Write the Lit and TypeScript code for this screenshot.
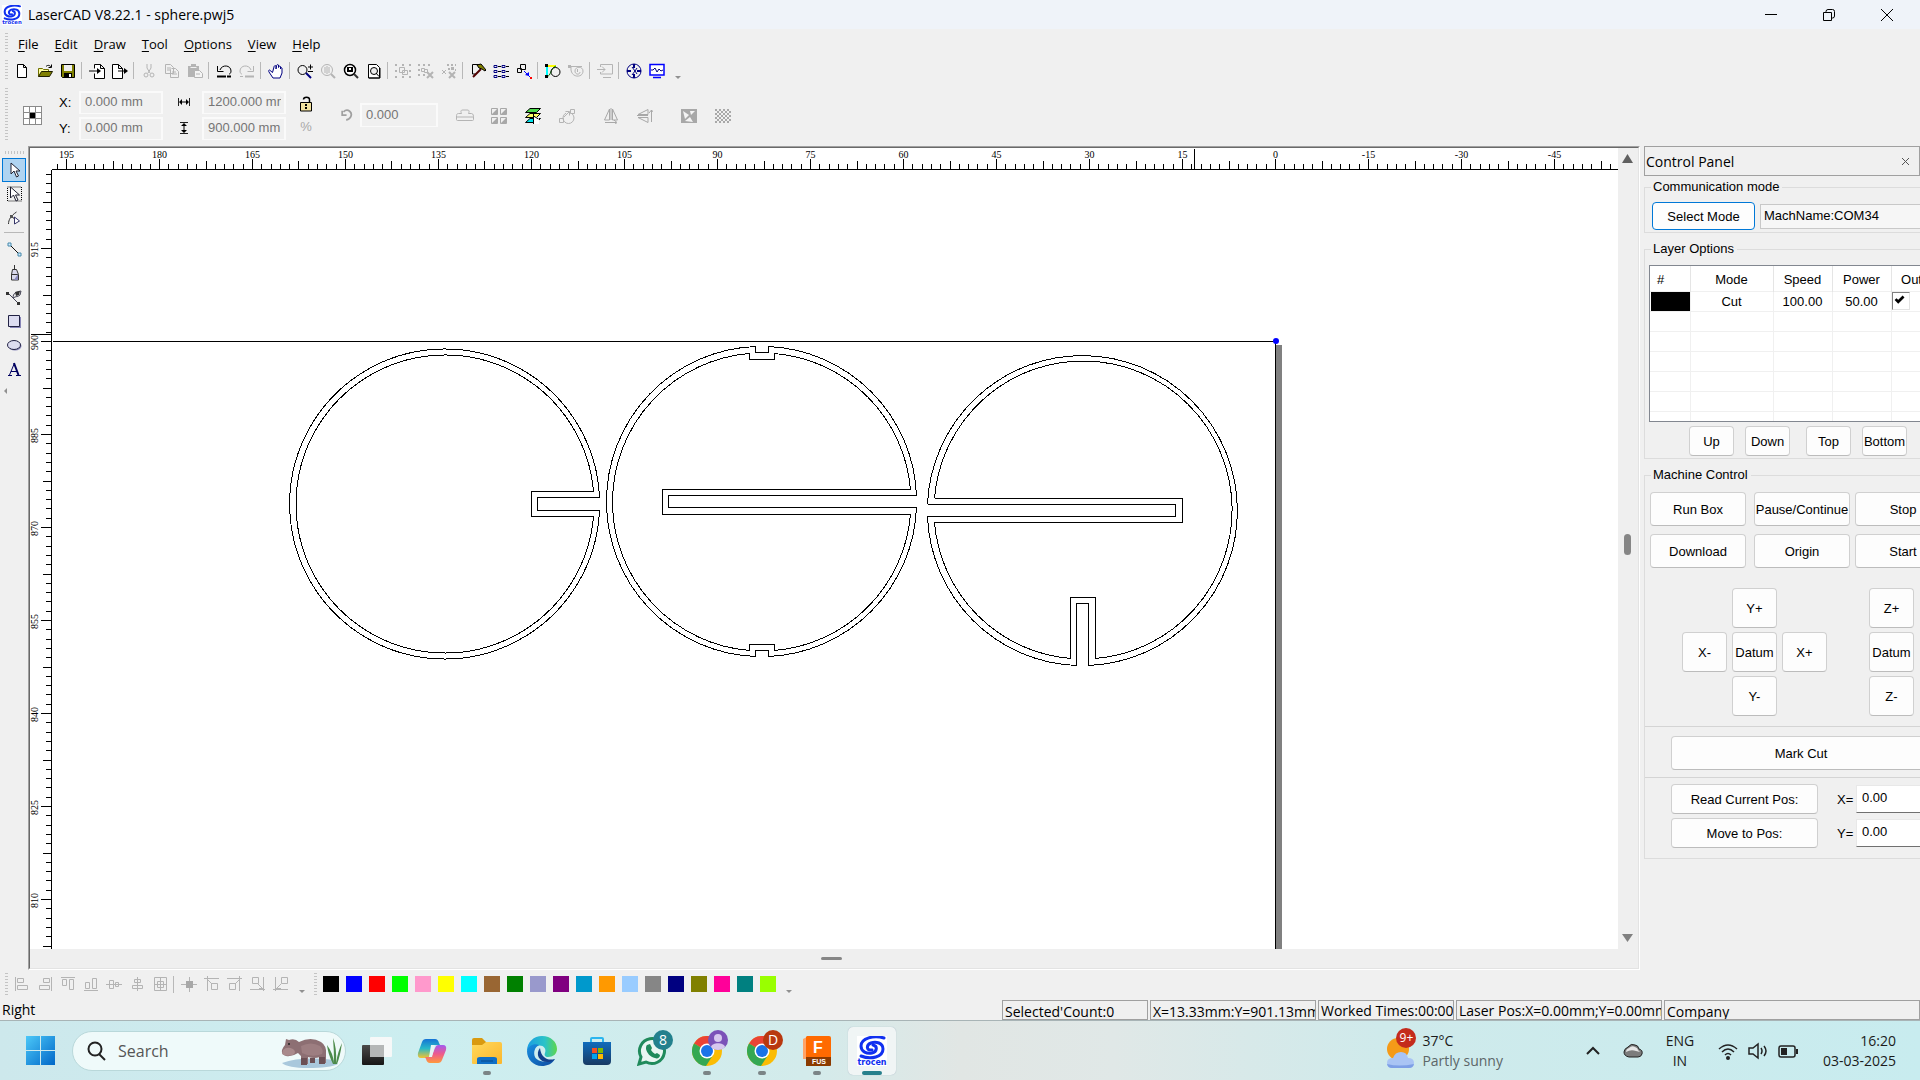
import { LitElement, html, svg, css, type TemplateResult } from "lit";
import { customElement } from "lit/decorators.js";

type Art = TemplateResult<2>;

const icon = (art: unknown, size = 16, box = 16) =>
  html`<svg width=${size} height=${size} viewBox="0 0 ${box} ${box}" aria-hidden="true">${art}</svg>`;

/* ---------- toolbar icons, on a 16 x 16 grid ---------- */
const line = (d: string, color = "#000", w = 1, fill = "none"): Art =>
  svg`<path d=${d} fill=${fill} stroke=${color} stroke-width=${w}/>`;
const G = "#b4b4b4";

const art: Record<string, unknown> = {
  new: line("M3.5 1.500h6l3 3v10h-9zM9.5 1.500v3h3", "#000", 1, "#fff"),
  open: svg`${line("M1.5 13.5v-8h4l1 1h5v3", "#707000", 1, "#ffffa0")}${line("M1.5 13.5l3-5h11l-3 5z", "#202000", 1, "#808000")}${line("M9 3.500c2-2 4-1 5 .5M14.500 1.500v3h-3")}`,
  save: svg`${line("M1.500 1.500h13v13h-12l-1-1z", "#000", 1, "#808000")}<path d="M4 2h8v6H4z" fill="#f0f0f0"/><path d="M4 10h8v5H4z" fill="#000"/><path d="M9 11h2v3H9z" fill="#fff"/>`,
  import: svg`${line("M5.500 5.500v-4h6l4 4v10h-10v-5M11.500 1.500v4h4", "#000", 1, "#fff")}${line("M0 8h9")}<path d="M8 5l4 3-4 3z"/>`,
  export: svg`${line("M.5 1.500h6l4 4v10h-10zM6.500 1.500v4h4", "#000", 1, "#fff")}${line("M6 8h7")}<path d="M12 5l4 3-4 3z"/>`,
  cut: svg`${line("M6 1v4l3 5M10 1v4l-3 5", G, 1)}<circle cx="5" cy="12" r="2" fill="none" stroke=${G}/><circle cx="11" cy="12" r="2" fill="none" stroke=${G}/>`,
  copy: line("M1.500 1.500h5l3 3v6h-8zM3 5h4M3 7h4M7.500 5.500h4l3 3v6h-8v-8M8 9h4M8 11h5", G),
  paste: svg`<path d="M1 3h3V1h5v2h3v11H1z" fill=${G}/>${line("M3.500 4.500h6", "#f0f0f0")}${line("M7.500 7.500h5l3 3v4h-8zM9 11h4", G, 1, "#f4f4f4")}`,
  undo: svg`${line("M4 7c2-6 11-5 11 1 0 2-1 3-2 3M1.500 3v5.500h6", "#000", 1)}${line("M1 13.500h9", "#000", 2)}${line("M11 13.500h4", "#000", 2)}`,
  redo: svg`${line("M12 7c-2-6-11-5-11 1 0 2 1 3 2 3M14.500 3v5.500h-6", G, 1)}${line("M6 13.500h9", G, 2)}${line("M1 13.500h3", G, 1)}`,
  hand: line("M4.500 9.500l-3-2.500c-1 0-1 1-.5 2l4 6h7l2-5V5c-1-1-1.500 0-1.500 1V3.500c-1-1-2 0-2 1V2c-1-1-2 0-2 1l-.5 3V3c-1-1-2 0-2 1z", "#000080", 1, "#fff"),
  zoom: svg`<circle cx="5.500" cy="7" r="4.500" fill="none" stroke="#000"/>${line("M9 10l5 5", "#000080", 2)}${line("M11 4h5M13.500 1.500v5M11 8.500h5")}`,
  zoomsel: svg`<circle cx="7" cy="7" r="5.500" fill="none" stroke=${G}/>${line("M5 4v6M7 3v8M9 4v6", G, 1)}${line("M11 11l4 4", G, 2)}`,
  zoomall: svg`<circle cx="7" cy="7" r="5.500" fill="#fff" stroke="#000" stroke-width="1.500"/><path d="M4 4h6v5H4z"/><path d="M6 5h2v2H6z" fill="#fff"/>${line("M11 11l4 4", "#333", 2)}`,
  zoompage: svg`${line("M2.500 1.500h8l3 3v10.500h-11z", "#000", 1, "#fff")}${line("M3 15h11v-10", "#000", 1)}<circle cx="8" cy="8" r="3.500" fill="#eee" stroke="#000"/>${line("M10 10l3 3.500", "#000", 1)}`,
  group: svg`${line("M4.500 4.500h5v5h-5zM7.500 7.500h5v4h-5z", G)}<path d="M0 1h2v2H0zM7 1h2v2H7zM14 1h2v2h-2zM0 7h2v2H0zM14 7h2v2h-2zM0 13h2v2H0zM7 13h2v2H7zM14 13h2v2h-2z" fill=${G}/>`,
  ungroup: svg`${line("M3.500 5.500h3v3h-3zM6.500 6.500h3v3h-3z", G)}<path d="M0 1h2v2H0zM5 1h2v2H5zM10 1h2v2h-2zM0 6h2v2H0zM0 11h2v2H0zM5 11h2v2H5z" fill=${G}/>${line("M9 9l6 6M15 9l-6 6", G, 2)}`,
  ungroupall: svg`${line("M1 7l4 4M5 7l-4 4", G, 1)}${line("M8 9l6 6M14 9l-6 6", G, 2)}<path d="M6 1h2v2H6zM10 1h2v2h-2zM14 1h1v2h-1zM10 4h3v3h-3zM7 5h2v2H7zM14 6h1v2h-1z" fill=${G}/>`,
  hammer: svg`${line("M2.500 11v-9.500h7M2.500 11h3", "#000", 1)}${line("M3 14l8-8", "#500000", 2)}<path d="M7 2l4-1 5 6-1 1-3-2-3-1z" fill="#808000" stroke="#000"/>`,
  list: svg`${line("M1 2.500h3v2h-3zM1 7.500h3v2h-3zM1 12.500h3v2h-3zM9 2.500h3v2h-3zM9 7.500h3v2h-3zM9 12.500h3v2h-3z", "#000080")}${line("M5 3.500h3M5 8.500h3M5 13.500h3M13 3.500h3M13 8.500h3M13 13.500h3")}`,
  node: svg`${line("M4.500 1.500h5v5h-5zM1.500 5.500h4v4h-4z")}${line("M8 8l6 6", "#00f", 1)}<path d="M9 12l4-3v4z" fill="#00f"/><path d="M14 14h2v2h-2z" fill="red"/>`,
  curve: svg`${line("M2 3h9", "#ff0", 2)}${line("M2 4v8", "#0ff", 2)}${line("M2 13c4 1 3-8 9-10", "#008000", 1)}<circle cx="10.500" cy="9" r="4.500" fill="none" stroke="#000"/><path d="M0 1h3v3H0zM0 12h3v3H0z"/>`,
  spiral: svg`${line("M1 3.500h13M3 4v3c1 8 12 8 12 1 0-5-8-5-8 0 0 4 5 4 5 1", G)}<path d="M0 2h3v3H0z" fill=${G}/>${line("M9.500 6v3", G, 1)}`,
  send: svg`${line("M3.500 4v-2.500h12v9.500h-12v-2M6 14.500h8", G, 1)}${line("M0 6.500h8M5 3.500l3 3-3 3", G, 1)}`,
  target: svg`<circle cx="8" cy="8" r="7" fill="none" stroke="#000080" stroke-width="1"/>${line("M8 1v4M8 11v4M1 8h4M11 8h4", "#000080", 2)}${line("M6 4l3 4-3 4M11 5l-2 3 2 3", "#000080", 1)}`,
  monitor: svg`${line("M1 1.500h14v10.500h-14zM4 14.500h8", "#00f", 1.5, "#fff")}${line("M2 7h2l2-2 2 4 2-3 2 2 2-1", "#000080", 1)}`,
  anchor: svg`<rect x="0" y="0" width="19" height="19" fill="#8a8a8a"/><path d="M1 1h5v5H1zM7 1h5v5H7zM13 1h5v5h-5zM1 7h5v5H1zM13 7h5v5h-5zM1 13h5v5H1zM7 13h5v5H7zM13 13h5v5h-5z" fill="#fff"/><path d="M7 7h5v5H7z"/>`,
  width: svg`${line("M2.500 4v8M13.500 4v8", "#222", 1)}${line("M4 8h8", "#000", 1)}<path d="M3 8l3-3v6zM13 8l-3-3v6z"/>`,
  height: svg`${line("M4 2.500h8M4 13.500h8", "#222", 1)}${line("M8 4v8", "#000", 1)}<path d="M8 3l-3 3h6zM8 13l-3-3h6z"/>`,
  lock: svg`${line("M11.500 7V3.500c0-3-6-3-6 0", "#000", 1.5)}${line("M2.500 6.500h11v8.500h-11z", "#000", 1, "#f2e2a0")}<path d="M7 8h2v2H7zM7 11h2v2H7z"/>`,
  rotate: svg`${line("M4 4.500c5-5 11 1 8 6-1 2-3 3-5 3M2.500 3v5h5", "#a0a0a0", 2)}`,
  stamp: svg`${line("M7 3h4c3 0 2 2 1.500 3.500h3c2 0 2 3 2 3.500h-17c0-2 0-3.500 2-3.500h3C5 5 4 3 7 3z", G)}${line("M.5 10v2.500q0 1 1 1h15q1 0 1-1V10", G)}`,
  tiles: svg`${line("M.5.5h6v6h-6zM9.500.5h6v6h-6zM.5 9.500h6v6h-6zM9.500 9.500h6v6h-6z", "#a8a8a8")}<path d="M6 1v5H1zM15 1v5h-5zM6 10v5H1zM15 10v5h-5z" fill="#a8a8a8"/>`,
  layers: svg`${line("M5 .5h10.500l-4 4H.5z", "#000", 1, "#4ddb4d")}${line("M5 5.500h10.500l-4 4H.5z", "#000", 1, "#ffff66")}${line("M5 10.500h10.500l-4 4H.5z", "#000", 1, "#00e5ee")}<path d="M9 9h5v7H9z" fill="#fff"/>${line("M8.500 6v10M8.500 8l5 3", "#000", 1)}`,
  path: svg`<circle cx="9.500" cy="10" r="5.500" fill="none" stroke=${G}/><path d="M6 3h7v7H9z" fill="#f0f0f0"/>${line("M.5 10.500h4v4h-4zM11.500 1.500h4v4h-4zM5 9l5-5M6.500 3.500h4v4", G)}`,
  mirrorh: line("M6.500 1v11h-5zM9.500 1v11h5zM8 0v12M2 14.500h11M11 12l3 2.500-3 2.500", "#a8a8a8"),
  mirrorv: line("M0 7.500h11zM11 1.500v5h-10zM11 9.500v5l-10-5zM14.500 2v12M12 5l2.500-3 2.500 3", "#a8a8a8"),
  invert: svg`<path d="M0 1h16v14H0z" fill="#a8a8a8"/><path d="M2 3l6 4-4 4zM9 3h5l-4 4zM4 13l5-4 3 5z" fill="#f4f4f4"/>`,
  dither: svg`${[0, 1, 2, 3, 4, 5, 6].map((r) => [0, 1, 2, 3].map((c) => svg`<rect x=${c * 4 + (r % 2) * 2} y=${r * 2 + 1} width="2" height="2" fill="#a8a8a8"/>`))}`,
  arrow: line("M5 1v11l3-3 2.500 6 2-1-2.500-5h4z", "#202030", 1, "#fff"),
  select: svg`<rect x="1.500" y="1" width="14" height="14" fill="none" stroke="#000" stroke-dasharray="1 1"/>${line("M4.500 1v11l3-3 2.500 6 2-1-2.500-5h4z", "#202030", 1, "#fff")}`,
  nodeedit: svg`${line("M2.500 14c0-4 2-8 8-12M5 5l5 6", "#333", 1)}${line("M8.500 7v7l5-3z", "#336", 1, "#fff")}<path d="M4 5h3v3H4z" fill="#555"/>`,
  segment: svg`${line("M3 3l10 10", "#111", 1)}<path d="M2 2h3v3H2zM12 12h3v3h-3z" fill="#d5ecff" stroke="#48a"/>`,
  pen: svg`${line("M8.500 0v5M6.500 4.500h4l2 5v5.500h-7V9.500zM5 9.500h7", "#333", 1, "#d8d8ec")}<path d="M8 15l4-6v6z" fill="#8888bb"/>`,
  bezier: svg`${line("M2 4l10 10M7 9c0-5 3-6 8-7l-1 4c-2 2-4 1-7 3", "#445", 1)}<path d="M0 3h3v3H0zM11 13h3v3h-3zM9 3l5-1-1 4-3 1z" fill="#333"/>`,
  rect: svg`<path d="M4 4h11v11H4z" fill="#8886b8"/>${line("M2.500 2.500h11v11h-11z", "#222244", 1, "#dcdcf0")}`,
  ellipse: svg`<ellipse cx="9" cy="9" rx="6.500" ry="4.500" fill="#8886b8"/><ellipse cx="8" cy="8" rx="6.500" ry="4.500" fill="#dcdcf0" stroke="#222244"/>`,
  text: svg`${line("M2 14.500h4M10 14.500h5M3.500 14l5-12M5 10.500h6", "#000060", 1)}${line("M8 2l4.500 12", "#000060", 2)}`,
  left: line("M1.500 1v14M3.500 2.500h6v4h-6zM3.500 9.500h10v4h-10z", G),
  right: line("M14.500 1v14M6.500 2.500h6v4h-6zM2.500 9.500h10v4h-10z", G),
  top: line("M1 1.500h14M2.500 3.500h4v6h-4zM9.500 3.500h4v10h-4z", G),
  bottom: line("M1 14.500h14M2.500 6.500h4v6h-4zM9.500 2.500h4v10h-4z", G),
  midh: line("M0 8.500h16M3.500 4.500h4v8h-4zM9.500 6.500h3v4h-3z", G),
  midv: line("M8.500 1v14M5.500 3.500h6v3h-6zM3.500 9.500h10v3h-10z", G),
  center: line("M2.500 1.500h12v13h-12zM8.500 1v14M2 8.500h13M5.500 5.500h6v6h-6z", G),
  pagecenter: svg`${line("M8.500 1v15M0 8.500h16", G)}<path d="M5 5h7v7H5z" fill="#a8a8a8"/>`,
  topleft: line("M0 2.500h15M3.500 0v15M7.500 7.500h6v6h-6zM4 4l4 4", G),
  topright: line("M0 2.500h15M12.500 0v15M2.500 7.500h6v6h-6zM8 8l4-4", G),
  bottomright: line("M0 13.500h15M13.500 1v14M2.500 1.500h6v6h-6zM8 8l5 5M9 12.500h4", G),
  bottomleft: line("M0 13.500h15M2.500 1v14M8.500 1.500h6v6h-6zM8 8l-5 5M8 12.500h-5", G),
};

/* ---------- brand artwork ---------- */
const trocen = svg`
  <rect width="30" height="30" fill="#fff"/>
  <g fill="none" stroke="#1030f0" stroke-linecap="round">
    <path d="M27 2C17-1 4 2 4 10c0 6 6 8 11 7 5-1 6-7 1-8" stroke-width="3"/>
    <path d="M4 20c10 4 22 1 22-7 0-6-7-8-12-6-5 2-5 8 1 7" stroke-width="3"/>
  </g>
  <text x="15" y="29" text-anchor="middle" class="brand" font-size="8">trocen</text>`;

const chrome = svg`
  <circle cx="15" cy="15" r="15" fill="#fbbc04"/>
  <path d="M15 15L2 7.500A15 15 0 0 1 28 7.500L15 8z" fill="#ea4335"/>
  <path d="M15 15L2 7.500A15 15 0 0 0 14 30l7-11z" fill="#34a853"/>
  <circle cx="15" cy="15" r="7.500" fill="#fff"/><circle cx="15" cy="15" r="6" fill="#1a73e8"/>`;

const apps: { name: string; art: unknown; badge?: unknown; tone?: string; running?: boolean; active?: boolean }[] = [
  {
    name: "Task view",
    art: svg`<defs><linearGradient id="tv" x2="0" y2="1"><stop stop-color="#4a4a4a"/><stop offset="1" stop-color="#161616"/></linearGradient></defs>
      <rect x="0" y="9" width="22" height="20" rx="1" fill="url(#tv)"/><rect x="8" y="1" width="22" height="20" rx="1" fill="#f6f8f8"/><rect x="8" y="9" width="14" height="12" fill="#b5b7b7"/>`,
  },
  {
    name: "Copilot",
    art: svg`<defs><linearGradient id="c1" x2="0" y2="1"><stop stop-color="#1473d6"/><stop offset=".5" stop-color="#28b8c8"/><stop offset="1" stop-color="#f3c430"/></linearGradient>
      <linearGradient id="c2" x2="0" y2="1"><stop stop-color="#a35bf0"/><stop offset=".5" stop-color="#ee5a8c"/><stop offset="1" stop-color="#ff9a3c"/></linearGradient></defs>
      <path d="M9 3h9q3 0 4 4l1 2h-4q-3 0-4 4l-2 6q-1 3-4 3H4q-4 0-3-5L5 6q1-3 4-3z" fill="url(#c1)"/>
      <path d="M21 9h5q4 0 3 5l-4 10q-1 3-4 3h-8q-3 0-4-4l-1-2h4q3 0 4-4l2-5q1-3 3-3z" fill="url(#c2)"/><path d="M14 9h4l-3 12h-3z" fill="#e6f4f4"/>`,
  },
  {
    name: "File Explorer",
    running: true,
    art: svg`<defs><linearGradient id="fe" x2="1" y2="1"><stop stop-color="#ffd95c"/><stop offset="1" stop-color="#fbb62c"/></linearGradient></defs>
      <path d="M0 4q0-2 2-2h8l4 4v6H0z" fill="#d99a10"/><path d="M0 9h10l4-3h14q2 0 2 2v19q0 1-1 1H1q-1 0-1-1z" fill="url(#fe)"/>
      <path d="M5 28v-5q0-2 3-2h14q3 0 3 2v5z" fill="#0f6fc6"/><path d="M9 25h12" stroke="#0a4a8a" stroke-width="1"/>`,
  },
  {
    name: "Edge",
    art: svg`<defs><linearGradient id="e1" x2="1"><stop stop-color="#1b9de2"/><stop offset=".6" stop-color="#2bc3c8"/><stop offset="1" stop-color="#5fd64c"/></linearGradient>
      <linearGradient id="e2" x2="1" y2="1"><stop stop-color="#1a8fe0"/><stop offset="1" stop-color="#0c4aa0"/></linearGradient></defs>
      <path d="M0 15C0 6 7 0 15 0c9 0 15 6 15 13 0 5-4 8-9 8-3 0-4-2-3-4 2-5-3-9-8-7-5 1-9 3-10 5z" fill="url(#e1)"/>
      <path d="M0 15c1-6 8-8 12-6-4 2-6 7-4 12 2 4 10 7 20 2-3 5-8 7-13 7C6 30 0 23 0 15z" fill="url(#e2)"/>
      <path d="M13 12c-5 6-1 15 9 14 2 0 4-1 6-3-7 2-14-1-15-11z" fill="#12408c"/>`,
  },
  {
    name: "Microsoft Store",
    art: svg`<defs><linearGradient id="ms" x2="0" y2="1"><stop stop-color="#0f6cbd"/><stop offset="1" stop-color="#183a63"/></linearGradient></defs>
      <path d="M9 8V3q0-1 1-1h10q1 0 1 1v5" fill="none" stroke="#2cb5ee" stroke-width="2"/><path d="M1 6h28v19q0 4-4 4H5q-4 0-4-4z" fill="url(#ms)"/>
      <path d="M10 12h5v5h-5z" fill="#f25022"/><path d="M16 12h5v5h-5z" fill="#7fba00"/><path d="M10 18h5v5h-5z" fill="#00a4ef"/><path d="M16 18h5v5h-5z" fill="#ffb900"/>`,
  },
  {
    name: "WhatsApp",
    badge: "8",
    tone: "teal",
    art: svg`<path d="M2 28l2-7A12.500 12.500 0 1 1 9 26z" fill="#e9f6f2" stroke="#1f8a5b" stroke-width="3"/>
      <path d="M10 9l3-1 2 4-1 2c1 2 3 3 4 4l2-1 3 2c0 3-3 4-5 3-5-1-8-5-9-9 0-2 0-3 1-4z" fill="#1f8a5b"/>`,
  },
  {
    name: "Chrome",
    running: true,
    tone: "purple",
    badge: icon(svg`<circle cx="10" cy="8" r="4" fill="#d7c8ee"/><path d="M3 17c1-5 13-5 14 0-3 4-11 4-14 0z" fill="#d7c8ee"/>`, 20, 20),
    art: chrome,
  },
  { name: "Chrome, profile D", running: true, tone: "rust", badge: "D", art: chrome },
  {
    name: "Fusion",
    running: true,
    art: svg`<path d="M1 3l4-2v22H1z" fill="#ffa366"/><path d="M5 0h22q2 0 2 2v19H4V1z" fill="#ff6a00"/><path d="M4 21h25v8q0 1-1 1H4z" fill="#8a3a00"/>
      <text x="16" y="17" text-anchor="middle" class="mark" font-size="16">F</text><text x="17" y="28" text-anchor="middle" class="mark" font-size="7">FUS</text>`,
  },
  { name: "LaserCAD", active: true, art: trocen },
];

/* ---------- toolbars ---------- */
type Tool = [key: string, label: string, off?: boolean];
const toolGroups: Tool[][] = [
  [["new", "New"], ["open", "Open"], ["save", "Save"]],
  [["import", "Import"], ["export", "Export"]],
  [["cut", "Cut", true], ["copy", "Copy", true], ["paste", "Paste", true]],
  [["undo", "Undo"], ["redo", "Redo", true]],
  [["hand", "Pan"]],
  [["zoom", "Zoom"], ["zoomsel", "Zoom selection", true], ["zoomall", "Zoom all"], ["zoompage", "Zoom page"]],
  [["group", "Group", true], ["ungroup", "Ungroup", true], ["ungroupall", "Ungroup all", true]],
  [["hammer", "Settings"], ["list", "Object list"], ["node", "Path order"]],
  [["curve", "Smooth curve"], ["spiral", "Offset curve", true]],
  [["send", "Send", true]],
  [["target", "Position"], ["monitor", "Preview"]],
];
const propGroups: Tool[][] = [
  [["stamp", "Stamp", true], ["tiles", "Array", true], ["layers", "Layers"], ["path", "Lead in", true]],
  [["mirrorh", "Mirror horizontal", true], ["mirrorv", "Mirror vertical", true]],
  [["invert", "Invert", true], ["dither", "Dither", true]],
];
const sideGroups: Tool[][] = [
  [["arrow", "Pick"], ["select", "Select area"], ["nodeedit", "Edit nodes"]],
  [["segment", "Line"], ["pen", "Pen"], ["bezier", "Bezier"], ["rect", "Rectangle"], ["ellipse", "Ellipse"], ["text", "Text"]],
];
const alignGroups: Tool[][] = [
  [["left", "Align left", true], ["right", "Align right", true], ["top", "Align top", true], ["bottom", "Align bottom", true], ["midh", "Align middle", true], ["midv", "Align centre", true], ["center", "Centre both", true]],
  [["pagecenter", "Page centre", true], ["topleft", "Page top left", true], ["topright", "Page top right", true], ["bottomright", "Page bottom right", true], ["bottomleft", "Page bottom left", true]],
];
const palette = ["#000000", "#0000ff", "#ff0000", "#00ff00", "#ff99cc", "#ffff00", "#00ffff", "#996633", "#008000", "#9999cc", "#800080", "#0099cc", "#ff9900", "#99ccff", "#868686", "#000080", "#808000", "#ff0099", "#008080", "#99ff00"];

/* ---------- drawing surface ---------- */
const ORIGIN = { x: 1245, y: 193 };
const STEP = 9.3;

/* Ticks every 1.5 mm, numbered every 15 mm, over the visible width and height. */
const rulers = (width: number, height: number) => {
  const out: Art[] = [];
  for (let k = Math.ceil((ORIGIN.x - width) / STEP); k <= 131; k++) {
    const x = Math.round(ORIGIN.x - k * STEP);
    const top = k % 10 === 0 ? 10 : k % 5 === 0 ? 12 : 15;
    out.push(svg`<path class="ink" d="M${x} ${top}V21"/>`);
    if (k % 10 === 0) out.push(svg`<text class="tick" x=${x} y="9" text-anchor="middle">${k * 1.5}</text>`);
  }
  for (let k = -18; k * STEP < height - ORIGIN.y; k++) {
    const y = Math.round(ORIGIN.y + k * STEP);
    const left = k % 10 === 0 ? 10 : k % 5 === 0 ? 12 : 15;
    out.push(svg`<path class="ink" d="M${left} ${y}H21"/>`);
    if (k % 10 === 0) out.push(svg`<text class="tick" transform="translate(7 ${y + 1}) rotate(-90)" text-anchor="middle">${900 - k * 1.5}</text>`);
  }
  return out;
};

const parts = [
  /* disc with a short slot */
  "M569 349H507V362H569A155 155 0 1 1 569 349",
  "M563 343H501V368H563A149 149 0 1 1 563 343",
  /* disc with a long slot and two notches */
  "M886 347H638V359H886A155 155 0 0 1 738 508V502H725V508A155 155 0 0 1 576 353A155 155 0 0 1 725 198V204H738V198A155 155 0 0 1 886 347",
  "M880 341H632V366H880A149 149 0 0 1 744 502V496H719V502A149 149 0 0 1 582 353A149 149 0 0 1 719 205V211H744V205A149 149 0 0 1 880 341",
  /* disc with a long slot and a foot slot */
  "M897 356H1145V368H897A155 155 0 0 0 1046 517V455H1058V517A155 155 0 1 0 897 356",
  "M904 350H1152V374H904A149 149 0 0 0 1040 510V449H1065V510A149 149 0 1 0 904 350",
];

@customElement("app-root")
export class AppRoot extends LitElement {
  static styles = css`
    :host { display: block; --ui: "Open Sans", "Noto Sans", sans-serif; --sans: "Liberation Sans", Arial, sans-serif; font-family: var(--sans); font-size: 13px; color: #000; }
    * { box-sizing: border-box; }
    button, input, a { font: inherit; color: inherit; margin: 0; }
    svg { display: block; flex: none; }
    .app { display: flex; flex-direction: column; height: 100vh; min-height: 960px; background: #f0f0f0; overflow: hidden; }

    .title { display: flex; align-items: center; height: 29px; flex: none; background: #eff3f9; font-family: var(--ui); font-size: 14px; padding: 0 4px 0 2px; gap: 6px; }
    .title h1 { font: inherit; margin: 0; flex: 1; }
    .win { display: flex; }
    .win button { width: 58px; height: 28px; border: 0; background: none; padding: 0; display: grid; place-items: center; }

    .bar { display: flex; align-items: center; flex: none; padding-left: 5px; }
    .grip { width: 3px; align-self: stretch; margin: 3px 2px 3px 0; background: repeating-linear-gradient(#c4c4c4 0 1px, transparent 1px 3px); flex: none; }
    .menu { height: 28px; gap: 16px; font-family: var(--ui); font-size: 13px; padding-top: 1px; }
    .menu .grip { margin-right: -6px; }
    .menu button { border: 0; padding: 0; background: none; line-height: 20px; }
    .menu u { text-underline-offset: 2px; }
    .tools { height: 27px; }
    .tool { width: 23px; height: 23px; padding: 0; border: 0; background: none; display: grid; place-items: center; flex: none; }
    .sep { width: 1px; height: 17px; background: #b8b8b8; margin: 0 3px 0 2px; flex: none; }
    .more { width: 0; border: 3px solid transparent; border-top-color: #909090; border-bottom: 0; align-self: flex-end; margin: 0 9px 5px 7px; }

    .props { height: 62px; }
    .props .grip { margin: 4px 15px 5px 0; }
    .fields { display: grid; grid-template-columns: 20px 84px; row-gap: 3px; align-items: center; margin-left: 17px; }
    .fields.size { grid-template-columns: 26px 84px; margin-left: 13px; }
    .field { width: 100%; height: 23px; border: 2px solid #fafafa; border-bottom-width: 1px; background: #f0f0f0; color: #757575; padding: 0 3px 2px 4px; outline: none; }
    .ratio { display: grid; gap: 7px; width: 24px; margin-left: 8px; justify-items: center; color: #a8a8a8; }
    .turn { display: flex; align-items: center; gap: 6px; margin: 0 0 0 22px; }
    .turn input { width: 78px; height: 24px; }
    .cluster { display: flex; margin-left: 10px; padding-top: 2px; }
    .cluster .tool { width: 34px; }

    .main { display: flex; flex: 1; min-height: 0; }
    .side { width: 28px; flex: none; display: flex; flex-direction: column; align-items: center; padding-top: 5px; }
    .side .grip { width: 19px; height: 3px; margin: 0 0 4px; align-self: center; background: repeating-linear-gradient(90deg, #c4c4c4 0 1px, transparent 1px 3px); }
    .side .tool { width: 24px; height: 24px; border: 1px solid transparent; }
    .side .tool.on { background: #b0d4f1; border-color: #0078d7; }
    .side .sep { width: 20px; height: 1px; margin: 2px 0 4px; }
    .back { border: 3px solid transparent; border-right-color: #909090; border-left: 0; align-self: flex-start; margin: 7px 0 0 4px; }

    .view { flex: 1; min-width: 0; border: 1px solid; border-color: #a0a0a0 #fff #fff #a0a0a0; display: flex; }
    .inner { flex: 1; min-width: 0; border: 1px solid; border-color: #696969 #e3e3e3 #e3e3e3 #696969; display: grid; grid-template: minmax(0, 1fr) 19px / minmax(0, 1fr) 20px; background: #efefef; }
    .canvas { width: 100%; height: 100%; background: #fff; overflow: hidden; }
    .ink { fill: none; stroke: #000; stroke-width: 1; shape-rendering: crispEdges; }
    .shade { fill: #808080; shape-rendering: crispEdges; }
    .tick { font: 10px "Liberation Serif", serif; }
    .vscroll { display: flex; flex-direction: column; justify-content: space-between; align-items: center; padding: 6px 2px 6px 0; }
    .hscroll { grid-column: 1 / -1; display: grid; place-items: center; padding-right: 5px; }
    .hscroll i { width: 21px; height: 3px; border-radius: 2px; background: #868686; }
    .vscroll i { width: 7px; height: 21px; border-radius: 4px; background: #868686; margin-bottom: 8px; }

    .panel { width: 280px; flex: none; padding-left: 4px; overflow: hidden; }
    .panel > * { width: 310px; }
    .panel .head { width: 276px; height: 30px; border: 1px solid #a0a0a0; display: flex; align-items: center; justify-content: space-between; padding: 0 9px 0 1px; margin-bottom: 3px; font-family: var(--ui); font-size: 14px; }
    .head h2 { font: inherit; margin: 0; }
    .head button { border: 0; padding: 0; background: none; }
    .box { border: 1px solid #dcdcdc; margin: 0 0 8px; padding: 0 4px; min-width: 0; }
    .box legend { padding: 0 3px 0 2px; margin-left: 2px; line-height: 16px; height: 16px; }
    .row { display: flex; }
    .btn { height: 30px; padding: 0; border: 1px solid #d0d0d0; border-bottom-color: #bcbcbc; border-radius: 4px; background: #fdfdfd; white-space: nowrap; flex: none; display: flex; align-items: center; justify-content: center; }
    .comm { padding: 7px 0 2px 3px; gap: 5px; align-items: center; }
    .comm .btn { width: 103px; height: 28px; border-color: #0078d7; }
    .comm input { width: 180px; flex: none; height: 25px; border: 1px solid #c8c8c8; background: #f6f6f6; padding: 0 3px 2px; }
    .layers { height: 157px; border: 1px solid #828790; background: #fff; margin-top: 8px; overflow: hidden; }
    table { border-collapse: collapse; table-layout: fixed; width: 282px; }
    th { font-weight: 400; height: 25px; padding: 2px 0 0; text-align: center; border-right: 1px solid #e5e5e5; }
    th:first-child { text-align: left; padding-left: 7px; }
    td { height: 20px; padding: 0; text-align: center; border: 1px solid #f0f0f0; border-left: 0; }
    td.swatch { background: #000 content-box; padding: 0 0 0 1px; }
    td input { appearance: none; width: 18px; height: 18px; border: 1px solid; border-color: #808080 #e3e3e3 #e3e3e3 #808080; margin: 0; display: block; background: #fff; }
    td label { display: grid; }
    td label > * { grid-area: 1 / 1; }
    td svg { pointer-events: none; }
    .order { padding: 4px 0 2px 40px; }
    .order .btn { width: 45px; margin-right: 11px; }
    .order .btn:nth-child(2) { margin-right: 16px; }
    .cmds { display: grid; grid-template-columns: 104px 101px 96px; row-gap: 8px; padding: 9px 0 20px 1px; }
    .cmds .btn { width: 96px; height: 34px; }
    .jogs { display: flex; gap: 42px; padding-left: 33px; }
    .jog { display: grid; grid-template-columns: repeat(3, 45px); gap: 4px 5px; }
    .jog.z { grid-template-columns: 45px; }
    .jog .btn { height: 40px; }
    .jog .mid { grid-column: 2; }
    .jog .near { grid-column: 1; }
    .rule { border: 0; border-top: 1px solid #d4d4d4; margin: 10px -4px 9px; }
    .mark-row .btn { width: 260px; height: 34px; margin-left: 22px; }
    .rule.tight { margin: 7px -4px 6px; }
    .pos { display: grid; grid-template-columns: 147px 19px 100px; column-gap: 19px; row-gap: 4px; padding: 0 0 10px 22px; align-items: center; }
    .pos label { margin-right: -15px; }
    .pos input { height: 28px; width: 100px; border: 1px solid #e8e8e8; border-bottom-color: #707070; background: #fff; padding: 0 4px 4px 5px; margin-left: -19px; }

    .bottom { height: 28px; }
    .bottom .more { margin-left: 7px; margin-right: 9px; }
    .palette { display: flex; gap: 7px; padding: 0 3px 0 4px; }
    .chip { width: 16px; height: 16px; border: 0; padding: 0; }

    .status { height: 22px; flex: none; display: flex; gap: 2px; align-items: flex-end; font-family: var(--ui); font-size: 14px; }
    .status span { white-space: nowrap; overflow: hidden; line-height: 20px; }
    .hint { flex: 1; padding-left: 2px; }
    .pane { border: 1px solid #a0a0a0; height: 20px; padding-left: 2px; }
    .status .low { line-height: 22px; }
    .w1 { width: 146px; } .w2 { width: 166px; } .w3 { width: 136px; } .w4 { width: 206px; } .w5 { width: 256px; }

    .taskbar { height: 60px; flex: none; border-top: 1px solid #a8b4b6; background: linear-gradient(90deg, #cde8ec 0%, #cceef0 22%, #d3ebeb 42%, #e1e6e4 50%, #e0e8e7 58%, #cfeaeb 72%, #c8ecef 100%); display: flex; align-items: center; padding: 0 24px 0 26px; font-family: var(--ui); font-size: 14px; color: #1b1b1b; }
    .taskbar button { border: 0; background: none; padding: 0; }
    .search { display: flex; align-items: center; gap: 12px; width: 274px; height: 40px; margin-left: 17px; border-radius: 20px; background: #effafa; border: 1px solid #b9d8da; padding: 0 2px 0 13px; }
    .search input { flex: 1; min-width: 0; border: 0; background: none; outline: none; padding: 0; font-size: 16px; color: #555; }
    .search input::placeholder { color: #555; opacity: 1; }
    .apps { display: flex; gap: 7px; margin-left: 7px; }
    .app-btn { width: 48px; height: 48px; border-radius: 5px; position: relative; display: grid; place-items: center; }
    .apps .app-btn.active { box-shadow: 0 0 1px #9ab; background: #f0f5f5; }
    .dot { position: absolute; bottom: 0; left: 20px; width: 8px; height: 4px; border-radius: 2px; background: #7b8486; }
    .active .dot { left: 14px; width: 20px; background: #27808c; }
    .badge { position: absolute; top: 3px; right: 3px; width: 20px; height: 20px; border-radius: 10px; display: grid; place-items: center; color: #fff; font-size: 14px; line-height: 20px; }
    .teal { background: #23808d; } .purple { background: #7b52b8; } .rust { background: #b8380f; } .red { background: #c42b1c; }
    .brand { font-family: "DejaVu Sans", sans-serif; font-weight: 700; fill: #1030f0; }
    .mark { font-family: var(--sans); font-weight: 700; fill: #fff; }
    .spacer { flex: 1; }
    .weather { display: flex; align-items: center; gap: 4px; text-align: left; line-height: 20px; position: relative; margin-right: 82px; }
    .weather .badge { top: -3px; left: 10px; right: auto; font-size: 12px; }
    .muted { color: #5c6668; }
    .tray { display: flex; align-items: center; }
    .tray button { display: grid; place-items: center; }
    .tray .cloud { margin-left: 22px; }
    .tray .lang { width: 50px; margin: 0 13px 0 12px; line-height: 20px; text-align: center; }
    .tray .net { display: flex; gap: 10px; }
    .tray .clock { display: block; line-height: 20px; text-align: right; margin-left: 25px; }
  `;

  private onResize = () => this.requestUpdate();

  connectedCallback() {
    super.connectedCallback();
    window.addEventListener("resize", this.onResize);
  }

  disconnectedCallback() {
    window.removeEventListener("resize", this.onResize);
    super.disconnectedCallback();
  }

  private tools(groups: Tool[][]) {
    return groups.map(
      (g, i) => html`${i ? html`<span class="sep"></span>` : ""}${g.map((t) => this.tool(t))}`,
    );
  }

  private tool([key, label, off]: Tool, on = false) {
    return html`<button class="tool ${on ? "on" : ""}" aria-label=${label} ?disabled=${!!off}>${icon(art[key], key === "stamp" ? 18 : 16, key === "stamp" ? 18 : 16)}</button>`;
  }

  private canvas() {
    /* Space left for the drawing once the toolbars and the side panel are taken off. */
    const width = window.innerWidth - 332;
    const height = window.innerHeight - 279;
    return html`<svg class="canvas" role="img" aria-label="Drawing area">
      <g transform="translate(.5 .5)">
        <path class="ink" d="M21 21H4000M21 21V3000M0 186H21M1164 0V21"/>
        ${rulers(width, height)}
        <path class="ink" d="M22 193H1245V3000"/>
        ${parts.map((d) => svg`<path class="ink" d=${d}/>`)}
      </g>
      <rect class="shade" x="1246" y="197" width="6" height="3000"/>
      <circle cx="1246" cy="193" r="3" fill="#00f"/>
    </svg>`;
  }

  private panel() {
    const b = (t: string, c = "") => html`<button class="btn ${c}">${t}</button>`;
    const rows = [0, 1, 2, 3, 4, 5];
    return html`<aside class="panel">
      <div class="head"><h2>Control Panel</h2><button aria-label="Close panel">${icon(line("M1 1l7 7M8 1l-7 7", "#555"), 9, 9)}</button></div>
      <fieldset class="box">
        <legend>Communication mode</legend>
        <div class="row comm">${b("Select Mode")}<input aria-label="Machine name" .value=${"MachName:COM34"}></div>
      </fieldset>
      <fieldset class="box">
        <legend>Layer Options</legend>
        <div class="layers">
          <table>
            <colgroup><col width="40"><col width="83"><col width="59"><col width="59"><col width="41"></colgroup>
            <thead><tr><th>#</th><th>Mode</th><th>Speed</th><th>Power</th><th>Out</th></tr></thead>
            <tbody>
              <tr><td class="swatch"></td><td>Cut</td><td>100.00</td><td>50.00</td>
                <td><label><input type="checkbox" checked aria-label="Output">${icon(line("M4 8l3 3 6-6", "#000", 3), 16, 18)}</label></td></tr>
              ${rows.map(() => html`<tr><td></td><td></td><td></td><td></td><td></td></tr>`)}
            </tbody>
          </table>
        </div>
        <div class="row order">${["Up", "Down", "Top", "Bottom"].map((t) => b(t))}</div>
      </fieldset>
      <fieldset class="box">
        <legend>Machine Control</legend>
        <div class="cmds">${["Run Box", "Pause/Continue", "Stop", "Download", "Origin", "Start"].map((t) => b(t))}</div>
        <div class="jogs">
          <div class="jog">${b("Y+", "mid")}${b("X-", "near")}${b("Datum")}${b("X+")}${b("Y-", "mid")}</div>
          <div class="jog z">${b("Z+")}${b("Datum")}${b("Z-")}</div>
        </div>
        <hr class="rule">
        <div class="mark-row">${b("Mark Cut")}</div>
        <hr class="rule tight">
        <div class="pos">
          ${b("Read Current Pos:")}<label for="px">X=</label><input id="px" .value=${"0.00"}>
          ${b("Move to Pos:")}<label for="py">Y=</label><input id="py" .value=${"0.00"}>
        </div>
      </fieldset>
    </aside>`;
  }

  private taskbar() {
    return html`<footer class="taskbar">
      <button aria-label="Start">${icon(svg`<defs><linearGradient id="wn" x2="1" y2="1"><stop stop-color="#4cc8f8"/><stop offset="1" stop-color="#0067c8"/></linearGradient></defs><path d="M0 0h14v14H0zM15 0h14v14H15zM0 15h14v14H0zM15 15h14v14H15z" fill="url(#wn)"/>`, 29, 29)}</button>
      <div class="search">
        ${icon(svg`<circle cx="9" cy="8" r="6.500" fill="none" stroke="#222" stroke-width="2"/><path d="M13 13l6 6" stroke="#222" stroke-width="2"/>`, 20, 20)}
        <input type="search" aria-label="Search" placeholder="Search">
        <svg width="64" height="34" viewBox="0 0 64 34" aria-hidden="true">
          <path d="M3 29q20-7 52-3l4 4q-8 4-30 4-20 0-26-5z" fill="#a9c8dc"/>
          <path d="M20 8q12-6 22 0 6 4 5 12v9h-6v-6q-6 2-12 0v7h-7v-8l-3-3q-6 4-12 3-5-2-4-6 1-3 3-5l1-6 3 1q6-2 10 2z" fill="#8d6f73"/>
          <path d="M4 16q4-4 10-1 4 3 0 6-8 2-11-1z" fill="#a98a8c"/><path d="M22 12q10-5 19 0 4 4 2 8-10 4-20-1z" fill="#9d7e81"/>
          <circle cx="10" cy="10" r="1" fill="#222"/><path d="M22 24h6v7h-6zM40 23h6v7h-6zM31 24h5v5h-5z" fill="#6b5055"/>
          <path d="M54 30q-5-10-6-19 6 8 7 18 0-14-1-25 4 10 3 25 2-12 6-20-2 14-5 21z" fill="#4c8a4a"/>
        </svg>
      </div>
      <nav class="apps" aria-label="Applications">
        ${apps.map((a) => html`<button class="app-btn ${a.active ? "active" : ""}" aria-label=${a.name}>
          ${icon(a.art, 30, 30)}
          ${a.badge ? html`<span class="badge ${a.tone}">${a.badge}</span>` : ""}
          ${a.running || a.active ? html`<i class="dot"></i>` : ""}
        </button>`)}
      </nav>
      <span class="spacer"></span>
      <button class="weather">
        <svg width="32" height="40" viewBox="0 0 32 40" aria-hidden="true">
          <circle cx="12" cy="18" r="11" fill="#f59a18"/>
          <path d="M6 37q-5 0-5-5t6-5q2-6 8-6t7 6q6 0 6 5t-5 5z" fill="#a9c4f4"/><path d="M6 37q-4 0-5-4 12 3 27 0-1 4-5 4z" fill="#7d9fe6"/>
        </svg>
        <span>37°C<br><span class="muted">Partly sunny</span></span>
        <span class="badge red">9+</span>
      </button>
      <div class="tray">
        <button aria-label="Hidden icons">${icon(line("M2 11l6-6 6 6", "#222", 2))}</button>
        <button class="cloud" aria-label="OneDrive">${icon(svg`<path d="M6 16q-5-1-5-5 0-3 4-5 3-4 7-2 3 0 4 4 4 1 3 5-1 3-4 3z" fill="#7c7c7c" stroke="#222"/><path d="M3 11q0-3 3-4 3-3 6-1 3 1 3 3l2 2-4-1q-5-2-10 1z" fill="#e6e6e6"/>`, 20, 20)}</button>
        <button class="lang">ENG<br>IN</button>
        <button class="net" aria-label="Network, volume, battery">
          ${icon(svg`<path d="M1 8q9-8 18 0M4 11q6-6 12 0M7 14q3-3 6 0" fill="none" stroke="#222" stroke-width="1.500"/><circle cx="10" cy="17" r="2" fill="#222"/>`, 20, 20)}
          ${icon(svg`<path d="M1 7h4l5-4v14l-5-4H1z" fill="none" stroke="#222" stroke-width="1.500"/><path d="M13 7q2 3 0 6M16 5q4 5 0 10" fill="none" stroke="#222" stroke-width="1.500"/>`, 20, 20)}
          ${icon(svg`<rect x="1" y="5" width="16" height="11" rx="2" fill="none" stroke="#222" stroke-width="1.500"/><rect x="3" y="7" width="6" height="7" fill="#222"/><path d="M19 8v5" stroke="#222" stroke-width="2"/>`, 20, 20)}
        </button>
        <button class="clock">16:20<br>03-03-2025</button>
      </div>
    </footer>`;
  }

  render() {
    const menu = ["File", "Edit", "Draw", "Tool", "Options", "View", "Help"];
    const field = (label: unknown, name: string, value: string, id: string) =>
      html`<label for=${id} aria-label=${name}>${label}</label><input class="field" id=${id} disabled .value=${value}>`;
    return html`<div class="app">
      <header class="title">
        ${icon(trocen, 20, 30)}<h1>LaserCAD V8.22.1 - sphere.pwj5</h1>
        <div class="win">
          <button aria-label="Minimize">${icon(line("M0 5.500h12"), 12, 12)}</button>
          <button aria-label="Restore">${icon(line("M.5 3.500h8v8h-8zM3 3.500v-1q0-2 2-2h4.500q2 0 2 2V7q0 2-2 2H9"), 12, 12)}</button>
          <button aria-label="Close">${icon(line("M0 0l12 12M12 0L0 12"), 12, 12)}</button>
        </div>
      </header>
      <nav class="bar menu" aria-label="Menu"><span class="grip"></span>${menu.map((m) => html`<button><u>${m[0]}</u>${m.slice(1)}</button>`)}</nav>
      <div class="bar tools"><span class="grip"></span>${this.tools(toolGroups)}<i class="more"></i></div>
      <div class="bar props">
        <span class="grip"></span>
        ${icon(art.anchor, 19, 19)}
        <div class="fields">
          ${field("X:", "X", "0.000 mm", "fx")}${field("Y:", "Y", "0.000 mm", "fy")}
        </div>
        <div class="fields size">
          ${field(icon(art.width), "Width", "1200.000 mm", "fw")}${field(icon(art.height), "Height", "900.000 mm", "fh")}
        </div>
        <div class="ratio">${icon(art.lock)}<span>%</span></div>
        <div class="turn"><label for="fr" aria-label="Rotation">${icon(art.rotate, 14)}</label><input class="field" id="fr" disabled .value=${"0.000"}></div>
        ${propGroups.map((g) => html`<span class="cluster">${g.map((t) => this.tool(t))}</span>`)}
      </div>
      <main class="main">
        <div class="side">
          <span class="grip"></span>
          ${sideGroups.map((g, i) => html`${i ? html`<span class="sep"></span>` : ""}${g.map((t) => this.tool(t, t[0] === "arrow"))}`)}
          <i class="back"></i>
        </div>
        <div class="view"><div class="inner">
          ${this.canvas()}
          <div class="vscroll">${icon(svg`<path d="M5.500 0L11 9H0z" fill="#606060"/>`, 11, 11)}<i></i>${icon(svg`<path d="M0 2h11L5.500 10z" fill="#808080"/>`, 11, 11)}</div>
          <div class="hscroll"><i></i></div>
        </div></div>
        ${this.panel()}
      </main>
      <div class="bar bottom">
        <span class="grip"></span>${this.tools(alignGroups)}<i class="more"></i>
        <span class="grip"></span>
        <div class="palette">${palette.map((c) => html`<button class="chip" aria-label="Layer colour ${c}" style="background:${c}"></button>`)}</div>
        <i class="more"></i>
      </div>
      <div class="status">
        <span class="hint">Right</span>
        <span class="pane low w1">Selected'Count:0</span><span class="pane low w2">X=13.33mm:Y=901.13mm</span>
        <span class="pane w3">Worked Times:00:00</span><span class="pane w4">Laser Pos:X=0.00mm;Y=0.00mm</span><span class="pane low w5">Company</span>
      </div>
      ${this.taskbar()}
    </div>`;
  }
}
